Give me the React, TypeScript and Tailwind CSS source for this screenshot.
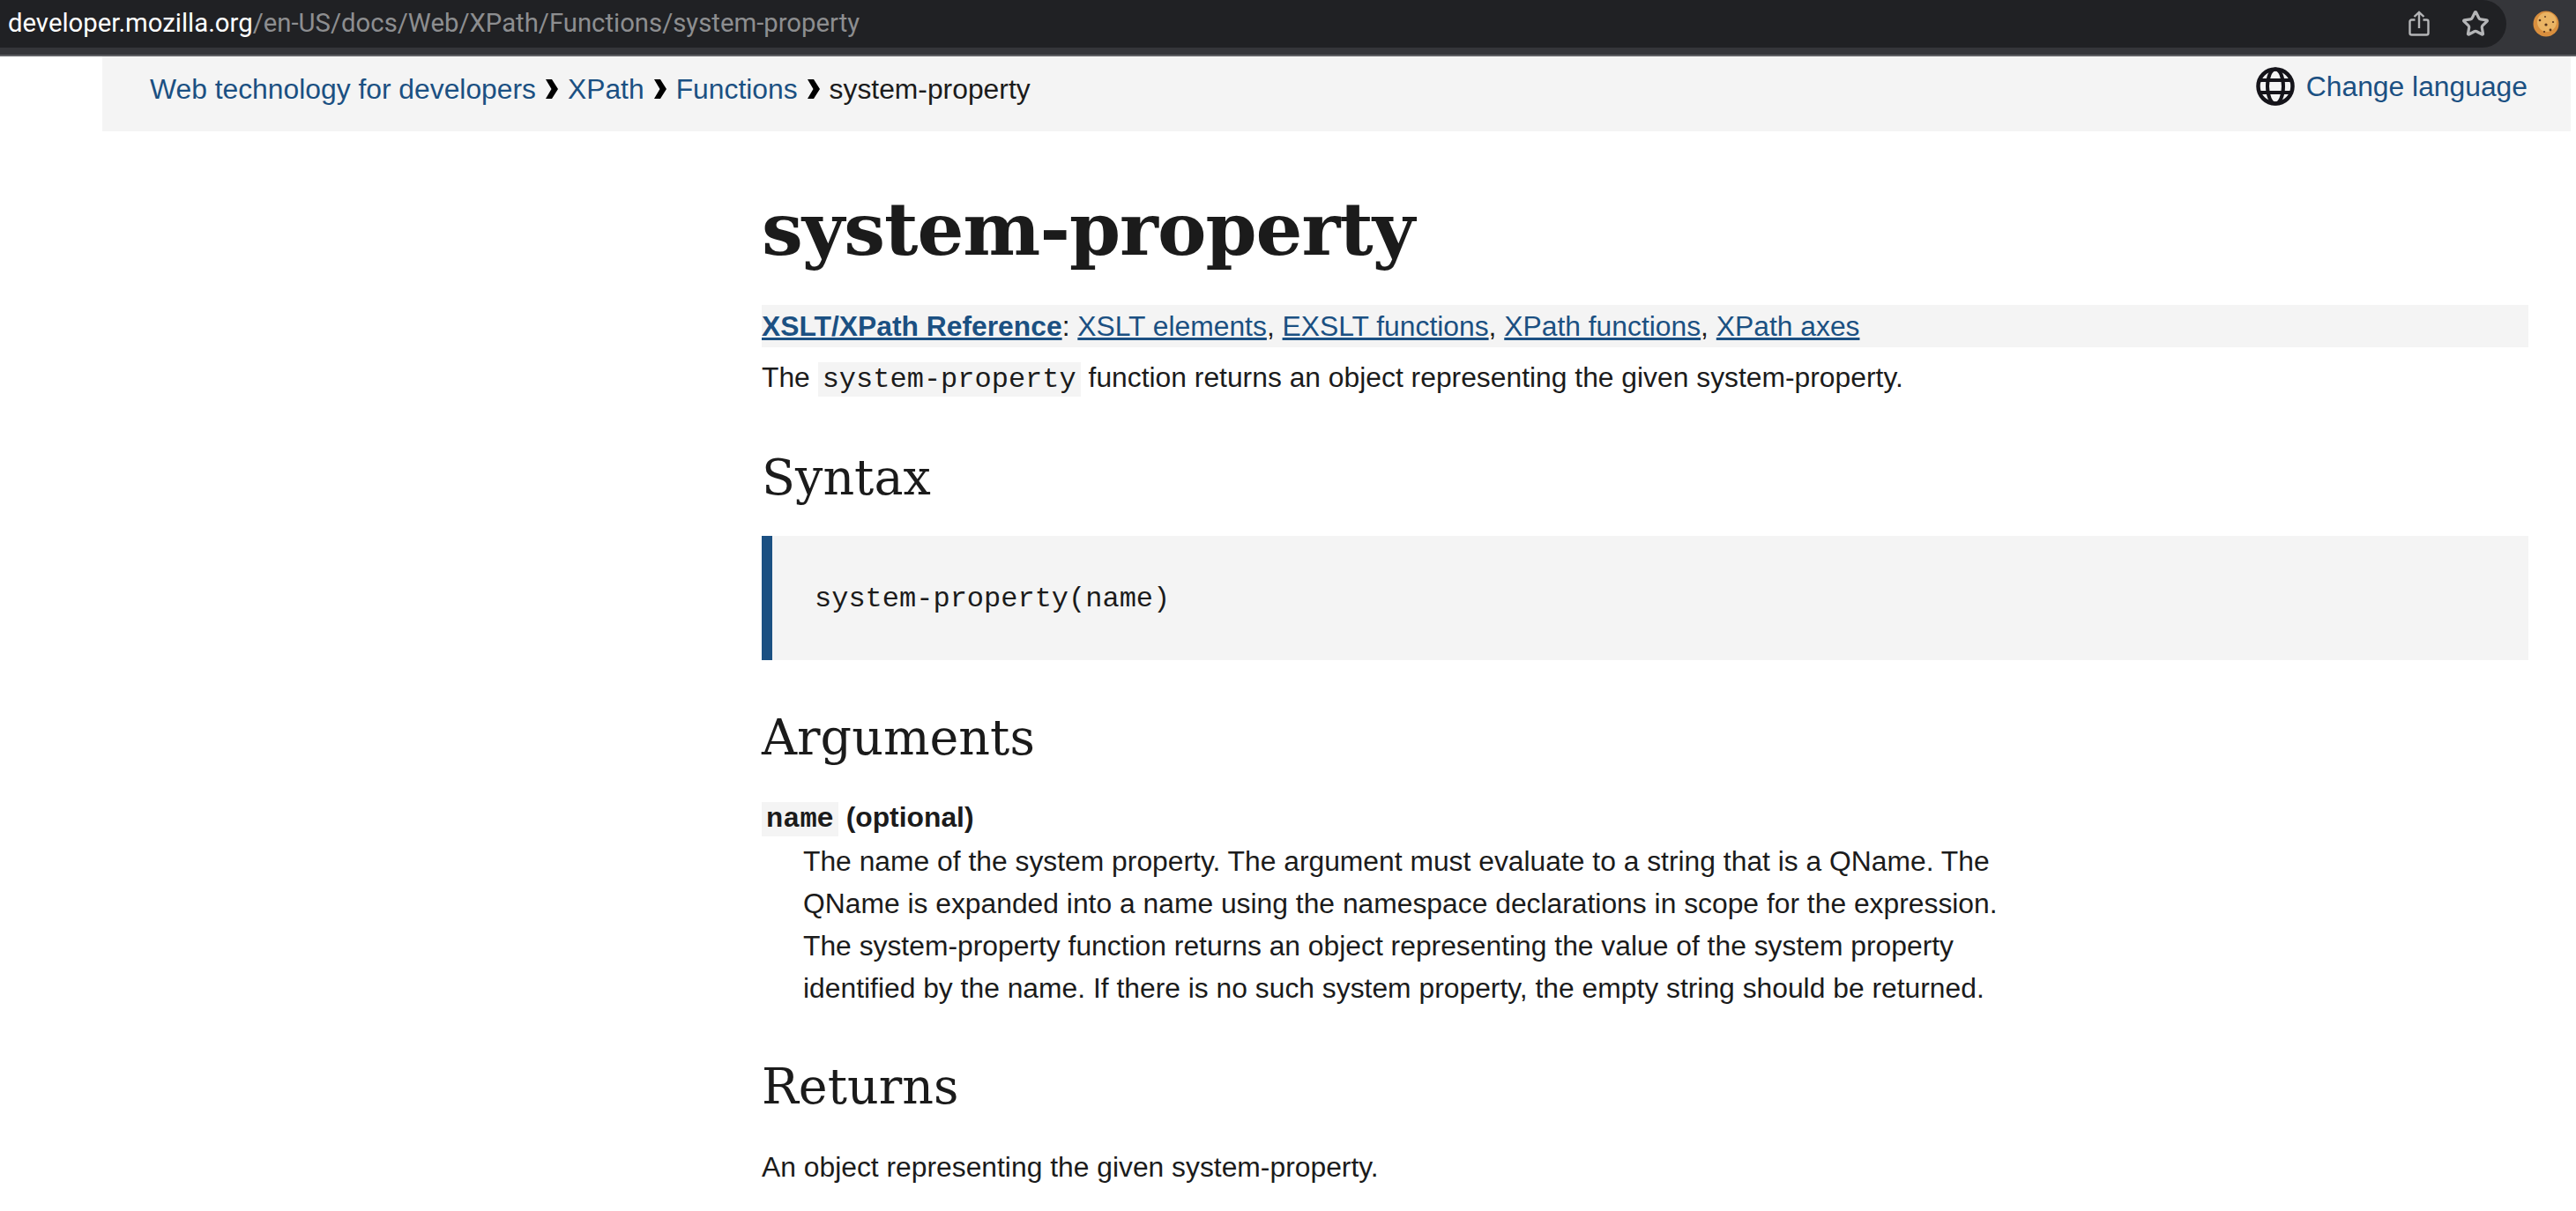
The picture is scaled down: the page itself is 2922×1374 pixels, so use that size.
import { Star } from "lucide-react";

const ARIAL = "font-['Liberation_Sans',Arial,sans-serif]";
const MONO = "font-['Liberation_Mono','Courier_New',monospace]";
const SLAB = "font-['DejaVu_Serif',Georgia,serif]";
const LINK = "text-[#1b5082]";

function Chevron() {
  return (
    <svg viewBox="0 0 14 22" className="ml-[11px] mr-[11px] h-[22px] w-[14px] shrink-0" aria-hidden="true">
      <path d="M0 0h7l7 11-7 11H0l6.500-11z" fill="#000" />
    </svg>
  );
}

function Globe() {
  return (
    <svg viewBox="0 0 44 44" className="h-[44px] w-[44px] shrink-0" aria-hidden="true">
      <circle cx="22" cy="22" r="19.500" fill="none" stroke="#15141a" strokeWidth="4.500" />
      <ellipse cx="22" cy="22" rx="9" ry="19.500" fill="none" stroke="#15141a" strokeWidth="4" />
      <path d="M3 15h38M3 29h38" stroke="#15141a" strokeWidth="4" />
    </svg>
  );
}

function ShareIcon() {
  return (
    <svg viewBox="0 0 24 30" className="h-[30px] w-[24px]" fill="none" stroke="#b4b5b7" strokeWidth="2.400" aria-hidden="true">
      <path d="M7.500 10.500H3.500a2 2 0 0 0-2 2v13a2 2 0 0 0 2 2h17a2 2 0 0 0 2-2v-13a2 2 0 0 0-2-2h-4" />
      <path d="M12 20V2M6.500 7 12 1.800 17.500 7" />
    </svg>
  );
}

function CookieIcon() {
  return (
    <svg viewBox="0 0 30 30" className="h-[30px] w-[30px]" aria-hidden="true">
      <circle cx="15" cy="15" r="14.500" fill="#d98f3e" />
      <circle cx="16" cy="13" r="11" fill="#eab464" />
      <g fill="#54321c">
        <circle cx="15" cy="16" r="1.600" />
        <circle cx="20" cy="22" r="1.400" />
        <circle cx="8" cy="11" r="1.300" />
        <circle cx="13" cy="24" r="1.100" />
        <circle cx="23" cy="13" r="1.100" />
        <circle cx="14" cy="7" r="0.900" />
      </g>
    </svg>
  );
}

function H2({ children, className }: { children: string; className: string }) {
  return (
    <h2 className={`${SLAB} text-[55.5px] leading-[70px] font-extralight text-[#1b1b1b] ${className}`}>
      {children}
    </h2>
  );
}

export default function App() {
  return (
    <div className={`${ARIAL} h-[1374px] w-[2922px] overflow-hidden bg-white text-[31.82px] text-[#1b1b1b]`}>
      <div className="flex h-[64px] items-start border-b-2 border-[#5f6064] bg-[#35363a]">
        <div className="flex h-[54px] flex-1 items-center justify-between rounded-r-[27px] bg-[#202124] pr-[19px]">
          <div className="pl-[9px] font-['Roboto',sans-serif] text-[29.3px] text-[#8d8e90]">
            <span className="text-white">developer.mozilla.org</span>/en-US/docs/Web/XPath/Functions/system-property
          </div>
          <div className="flex items-center gap-[36px]">
            <ShareIcon />
            <Star size={32} color="#b4b5b7" strokeWidth={2.4} />
          </div>
        </div>
        <div className="flex h-[54px] w-[79px] items-center justify-end pr-[19px]">
          <CookieIcon />
        </div>
      </div>

      <div className="ml-[116px] mr-[6px] flex h-[85px] items-start justify-between bg-[#f4f4f4] pl-[54px] pr-[49px]">
        <nav className="flex items-center pt-[17px] leading-[40px]">
          <span className={LINK}>Web technology for developers</span>
          <Chevron />
          <span className={LINK}>XPath</span>
          <Chevron />
          <span className={LINK}>Functions</span>
          <Chevron />
          <span>system-property</span>
        </nav>
        <div className="flex items-center gap-[13px] pt-[12px]">
          <Globe />
          <span className={`${LINK} leading-[40px]`}>Change language</span>
        </div>
      </div>

      <main className="ml-[864px] mr-[54px]">
        <h1 className={`${SLAB} pt-[58px] text-[83.2px] leading-[106px] font-bold tracking-[-1px]`}>system-property</h1>

        <div className="mt-[33px] h-[48px] bg-[#f4f4f4] leading-[48px]">
          <a className={`${LINK} font-bold underline`}>XSLT/XPath Reference</a>:{" "}
          <a className={`${LINK} underline`}>XSLT elements</a>, <a className={`${LINK} underline`}>EXSLT functions</a>,{" "}
          <a className={`${LINK} underline`}>XPath functions</a>, <a className={`${LINK} underline`}>XPath axes</a>
        </div>

        <p className="mt-[10px] leading-[48px]">
          The <code className={`${MONO} bg-[#f4f4f4] px-[5px] py-[1px] text-[32px]`}>system-property</code> function returns
          an object representing the given system-property.
        </p>

        <H2 className="mt-[52px]">Syntax</H2>

        <pre className={`${MONO} mt-[31px] h-[141px] border-l-[12px] border-[#1b5082] bg-[#f4f4f4] pl-[48px] text-[32px] leading-[143px]`}>
          system-property(name)
        </pre>

        <H2 className="mt-[53px]">Arguments</H2>

        <dl className="mt-[32px]">
          <dt className="leading-[47px] font-bold">
            <code className={`${MONO} bg-[#f4f4f4] px-[5px] py-[1px] text-[32px]`}>name</code> (optional)
          </dt>
          <dd className="ml-[47px] max-w-[1370px] leading-[48px]">
            The name of the system property. The argument must evaluate to a string that is a QName. The QName is expanded
            into a name using the namespace declarations in scope for the expression. The system-property function returns
            an object representing the value of the system property identified by the name. If there is no such system
            property, the empty string should be returned.
          </dd>
        </dl>

        <H2 className="mt-[53px]">Returns</H2>

        <p className="mt-[32px] leading-[48px]">An object representing the given system-property.</p>
      </main>
    </div>
  );
}
